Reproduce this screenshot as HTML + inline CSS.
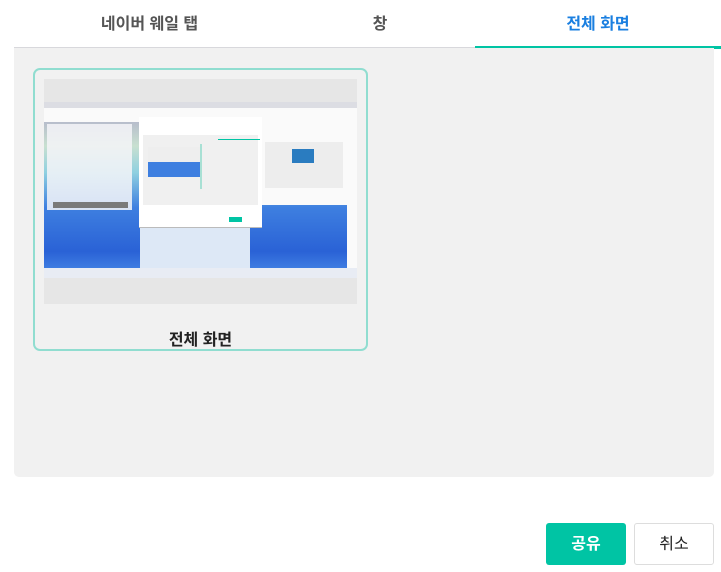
<!DOCTYPE html><html><head><meta charset="utf-8"><style>
*{margin:0;padding:0;box-sizing:border-box}
body{width:721px;height:572px;background:#fff;position:relative;overflow:hidden;font-family:"Liberation Sans","Noto Sans CJK KR",sans-serif}
.a{position:absolute}
.tab{position:absolute;top:0;height:47px;line-height:50px;font-size:16px;font-weight:bold;color:#555;text-align:center}
</style></head><body>
<div class="tab" style="left:14px;width:271px">네이버 웨일 탭</div>
<div class="tab" style="left:285px;width:190px">창</div>
<div class="tab" style="left:475px;width:246px;color:#1a7fe0">전체 화면</div>
<div class="a" style="left:14px;top:47px;width:707px;height:1px;background:#d8d8dc"></div>
<div class="a" style="left:475px;top:46px;width:246px;height:3px;background:#00c4a4"></div>
<div class="a" style="left:14px;top:48px;width:700px;height:429px;background:#f1f1f1;border-radius:0 0 5px 5px"></div>
<div class="a" style="left:33px;top:68px;width:335px;height:283px;border:2.5px solid #90ddd0;border-radius:7px"></div>
<div class="a" style="left:44px;top:79px;width:313px;height:225px;background:#e6e6e6"></div>
<div class="a" style="left:44px;top:102px;width:313px;height:176px;background:linear-gradient(180deg,#a9a0c8 0%,#c8e0d0 25%,#8fd0e0 40%,#3e7fe0 60%,#2a62d6 85%,#4a8ce8 100%)"></div>
<div class="a" style="left:44px;top:102px;width:313px;height:6px;background:#dcdde3"></div>
<div class="a" style="left:44px;top:108px;width:313px;height:14px;background:#fafafa"></div>
<div class="a" style="left:47px;top:124px;width:85px;height:86px;background:rgba(245,245,248,.85)"></div>
<div class="a" style="left:53px;top:202px;width:75px;height:6px;background:#7a7a7a"></div>
<div class="a" style="left:262px;top:117px;width:85px;height:88px;background:#fafafa"></div>
<div class="a" style="left:265px;top:142px;width:78px;height:46px;background:#ededed"></div>
<div class="a" style="left:292px;top:149px;width:22px;height:14px;background:#2a7cc0"></div>
<div class="a" style="left:140px;top:228px;width:110px;height:40px;background:#dde8f6"></div>
<div class="a" style="left:139px;top:117px;width:123px;height:111px;background:#fff;border-bottom:1px solid #bbb"></div>
<div class="a" style="left:143px;top:135px;width:115px;height:70px;background:#f0f0f0"></div>
<div class="a" style="left:148px;top:147px;width:52px;height:30px;background:linear-gradient(180deg,#eee 50%,#3e7fe0 50%)"></div>
<div class="a" style="left:200px;top:144px;width:2px;height:45px;background:#a8e0d4"></div>
<div class="a" style="left:229px;top:217px;width:13px;height:5px;background:#00c4a4"></div>
<div class="a" style="left:218px;top:139px;width:42px;height:1px;background:#00c4a4"></div>
<div class="a" style="left:347px;top:122px;width:10px;height:146px;background:#fafafa"></div>
<div class="a" style="left:44px;top:268px;width:313px;height:10px;background:#e8ecf4"></div>
<div class="a" style="left:33px;top:326px;width:335px;text-align:center;font-size:16px;font-weight:bold;color:#222">전체 화면</div>
<div class="a" style="left:546px;top:523px;width:80px;height:42px;background:#00c4a4;border-radius:3px;color:#fff;font-size:16px;font-weight:bold;text-align:center;line-height:44px">공유</div>
<div class="a" style="left:634px;top:523px;width:80px;height:42px;background:#fff;border:1px solid #ddd;border-radius:3px;color:#222;font-size:16px;text-align:center;line-height:42px">취소</div>
</body></html>
